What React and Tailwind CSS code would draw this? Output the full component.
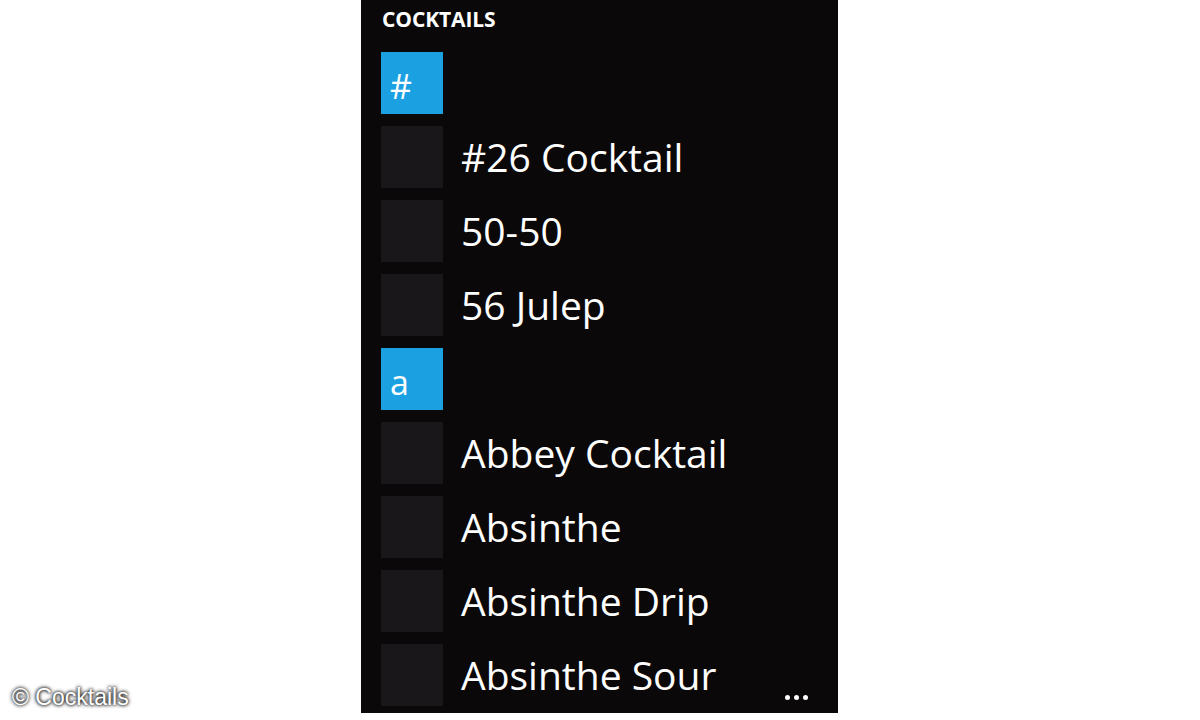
export default function App() {
  const sections = [
    { key: "#", items: ["#26 Cocktail", "50-50", "56 Julep"] },
    { key: "a", items: ["Abbey Cocktail", "Absinthe", "Absinthe Drip", "Absinthe Sour"] },
  ];
  return (
    <div className="relative w-[1200px] h-[720px] bg-white overflow-hidden">
      <div className="ml-[361px] w-[477px] h-[713px] bg-[#0b0809] overflow-hidden flex flex-col pl-[20px] pt-[7px]" style={{ fontFamily: '"Open Sans", sans-serif' }}>
        <div className="text-[21px] font-bold text-white leading-[24px] tracking-[-0.1px] ml-[1px]">COCKTAILS</div>
        <div className="flex flex-col gap-[12px] mt-[21px]">
          {sections.map((s) => (
            <div key={s.key} className="flex flex-col gap-[12px]">
              <div className="w-[62px] h-[62px] bg-[#1ba1e2] flex items-end pl-[9px] pb-[11px]">
                <span className="text-white text-[34px] leading-[34px]">{s.key}</span>
              </div>
              {s.items.map((it) => (
                <div key={it} className="flex items-center gap-[18px] h-[62px]">
                  <div className="w-[62px] h-[62px] bg-[#1a171a] shrink-0"></div>
                  <span className="text-white text-[39px] leading-[62px] whitespace-nowrap">{it}</span>
                </div>
              ))}
            </div>
          ))}
        </div>
      </div>
      <div className="absolute left-[785px] top-[695px] flex gap-[4px]">
        <span className="w-[5px] h-[5px] rounded-full bg-white"></span>
        <span className="w-[5px] h-[5px] rounded-full bg-white"></span>
        <span className="w-[5px] h-[5px] rounded-full bg-white"></span>
      </div>
      <div className="absolute left-[12px] top-[683px] text-white text-[23px] leading-[28px] [text-shadow:0_0_3px_#000,0_0_4px_#000]" style={{ fontFamily: '"Liberation Sans", Arial, sans-serif' }}>© Cocktails</div>
    </div>
  );
}
